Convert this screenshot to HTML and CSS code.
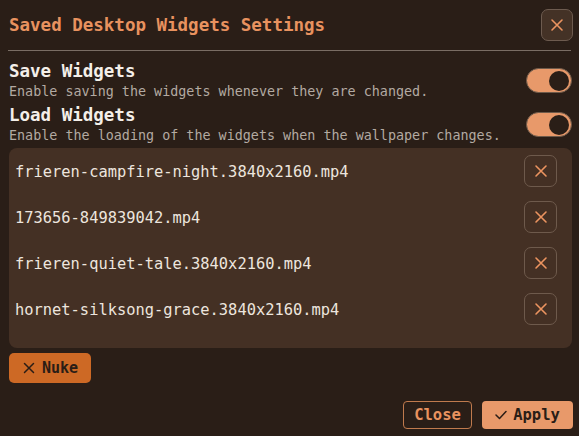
FILE: index.html
```html
<!DOCTYPE html>
<html>
<head>
<meta charset="utf-8">
<link rel="stylesheet" href="styles.css">
</head>
<body>
<div class="dialog">
  <div class="header">
    <div class="title">Saved Desktop Widgets Settings</div>
    <button class="icon-btn header-close" aria-label="Close">
      <svg width="14" height="14" viewBox="0 0 14 14"><path d="M2 2L12 12M12 2L2 12" stroke="#ec9460" stroke-width="1.6" stroke-linecap="round"/></svg>
    </button>
  </div>
  <div class="divider"></div>
  <div class="settings">
    <div class="setting">
      <div class="setting-text">
        <div class="setting-title">Save Widgets</div>
        <div class="setting-desc">Enable saving the widgets whenever they are changed.</div>
      </div>
      <div class="toggle"><div class="knob"></div></div>
    </div>
    <div class="setting">
      <div class="setting-text">
        <div class="setting-title">Load Widgets</div>
        <div class="setting-desc">Enable the loading of the widgets when the wallpaper changes.</div>
      </div>
      <div class="toggle"><div class="knob"></div></div>
    </div>
  </div>
  <div class="panel">
    <div class="file-row">
      <span class="file-name">frieren-campfire-night.3840x2160.mp4</span>
      <button class="icon-btn row-btn"><svg width="14" height="14" viewBox="0 0 14 14"><path d="M2 2L12 12M12 2L2 12" stroke="#ec9460" stroke-width="1.6" stroke-linecap="round"/></svg></button>
    </div>
    <div class="file-row">
      <span class="file-name">173656-849839042.mp4</span>
      <button class="icon-btn row-btn"><svg width="14" height="14" viewBox="0 0 14 14"><path d="M2 2L12 12M12 2L2 12" stroke="#ec9460" stroke-width="1.6" stroke-linecap="round"/></svg></button>
    </div>
    <div class="file-row">
      <span class="file-name">frieren-quiet-tale.3840x2160.mp4</span>
      <button class="icon-btn row-btn"><svg width="14" height="14" viewBox="0 0 14 14"><path d="M2 2L12 12M12 2L2 12" stroke="#ec9460" stroke-width="1.6" stroke-linecap="round"/></svg></button>
    </div>
    <div class="file-row">
      <span class="file-name">hornet-silksong-grace.3840x2160.mp4</span>
      <button class="icon-btn row-btn"><svg width="14" height="14" viewBox="0 0 14 14"><path d="M2 2L12 12M12 2L2 12" stroke="#ec9460" stroke-width="1.6" stroke-linecap="round"/></svg></button>
    </div>
  </div>
  <div class="nuke-wrap">
    <button class="nuke">
      <svg width="12" height="12" viewBox="0 0 12 12"><path d="M1.5 1.5L10.5 10.5M10.5 1.5L1.5 10.5" stroke="#2a1d16" stroke-width="1.5" stroke-linecap="round"/></svg>
      <span>Nuke</span>
    </button>
  </div>
  <div class="footer">
    <button class="btn-close">Close</button>
    <button class="btn-apply">
      <svg width="12" height="10" viewBox="0 0 12 10"><path d="M1 5L4.5 8.5L11 1.5" stroke="#2a1d16" stroke-width="1.5" fill="none" stroke-linecap="round" stroke-linejoin="round"/></svg>
      <span>Apply</span>
    </button>
  </div>
</div>
</body>
</html>
```
FILE: styles.css
```css
html, body {
  margin: 0;
  padding: 0;
  background: #2a1e17;
}
body {
  font-family: "DejaVu Sans Mono", "Liberation Mono", monospace;
  color: #efe6de;
  width: 579px;
  height: 436px;
  overflow: hidden;
}
button {
  font-family: inherit;
  cursor: pointer;
}
.dialog {
  padding: 9px 6px 0 8px;
}
.header {
  display: flex;
  align-items: center;
  justify-content: space-between;
  height: 32px;
}
.title {
  font-size: 17.5px;
  font-weight: bold;
  color: #e8925f;
  padding-left: 1px;
}
.icon-btn {
  display: flex;
  align-items: center;
  justify-content: center;
  padding: 0;
  background: transparent;
  border-radius: 7px;
}
.header-close {
  width: 32px;
  height: 32px;
  background: #443226;
  border: 1px solid #6d5b4f;
}
.divider {
  height: 1px;
  background: #7a6d64;
  margin: 9px 2px 0 0;
}
.settings {
  margin-top: 10px;
  display: flex;
  flex-direction: column;
  gap: 5px;
}
.setting {
  display: flex;
  align-items: center;
  justify-content: space-between;
  padding-left: 1px;
  padding-right: 1px;
}
.setting-title {
  font-size: 17.5px;
  line-height: 20px;
  font-weight: bold;
  color: #f4efe9;
}
.setting-desc {
  margin-top: 3px;
  font-size: 13.4px;
  line-height: 16px;
  color: #b3aaa2;
}
.toggle {
  height: 23px;
  border: 1px solid #6e5a4a;
  border-radius: 13px;
  background: #e8996a;
  display: flex;
  align-items: center;
  justify-content: flex-end;
  padding: 0 2px;
  box-sizing: content-box;
  width: 40px;
}
.knob {
  width: 20px;
  height: 20px;
  border-radius: 50%;
  background: #2a1e17;
}
.panel {
  margin: 4px 1px 0 1px;
  background: #443024;
  border-radius: 8px;
  padding: 0 15px 16px 6px;
}
.file-row {
  height: 46px;
  display: flex;
  align-items: center;
  justify-content: space-between;
}
.file-name {
  font-size: 15.4px;
  color: #ede5de;
  padding-top: 1px;
}
.row-btn {
  width: 33px;
  height: 32px;
  border: 1px solid #6e5a4c;
}
.nuke-wrap {
  margin-top: 5px;
  padding-left: 1px;
}
.nuke {
  display: inline-flex;
  align-items: center;
  gap: 7px;
  height: 30px;
  width: 82px;
  padding: 0 0 0 14px;
  border: none;
  border-radius: 5px;
  background: #cd6925;
  color: #2a1d16;
  font-size: 15px;
  font-weight: bold;
}
.footer {
  margin-top: 18px;
  display: flex;
  justify-content: flex-end;
  gap: 10px;
}
.btn-close {
  height: 28px;
  width: 69px;
  padding: 0;
  border: 1.5px solid #c07a4d;
  border-radius: 4px;
  background: transparent;
  color: #e8925f;
  font-size: 15.5px;
  font-weight: bold;
}
.btn-apply {
  height: 28px;
  width: 91px;
  display: inline-flex;
  align-items: center;
  justify-content: center;
  gap: 6px;
  padding: 0;
  border: none;
  border-radius: 4px;
  background: #e8996a;
  color: #2a1d16;
  font-size: 15.5px;
  font-weight: bold;
}
```
